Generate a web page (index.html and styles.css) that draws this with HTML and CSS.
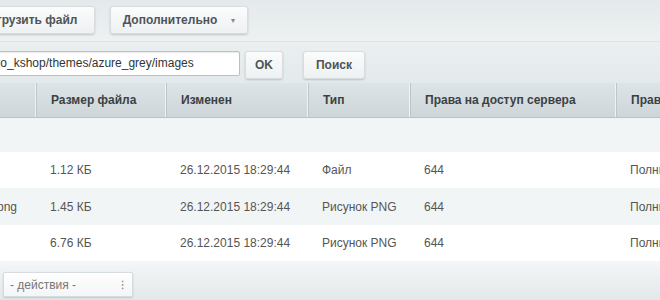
FILE: index.html
```html
<!DOCTYPE html>
<html lang="ru">
<head>
<meta charset="utf-8">
<link rel="stylesheet" href="styles.css">
</head>
<body>
<div class="page">
  <div class="toolbar">
    <div class="btn btn-upload">Загрузить файл</div>
    <div class="btn btn-more">Дополнительно <span class="caret">▾</span></div>
  </div>
  <div class="searchbar">
    <div class="path">aspro_kshop/themes/azure_grey/images</div>
    <div class="btn btn-ok">OK</div>
    <div class="btn btn-search">Поиск</div>
  </div>
  <div class="grid">
    <div class="row head">
      <div class="c c1"></div>
      <div class="c c2">Размер файла</div>
      <div class="c c3">Изменен</div>
      <div class="c c4">Тип</div>
      <div class="c c5">Права на доступ сервера</div>
      <div class="c c6">Права</div>
    </div>
    <div class="row r0">
      <div class="c c1"></div>
      <div class="c c2"></div>
      <div class="c c3"></div>
      <div class="c c4"></div>
      <div class="c c5"></div>
      <div class="c c6"></div>
    </div>
    <div class="row r1">
      <div class="c c1"></div>
      <div class="c c2">1.12 КБ</div>
      <div class="c c3">26.12.2015 18:29:44</div>
      <div class="c c4">Файл</div>
      <div class="c c5">644</div>
      <div class="c c6">Полный</div>
    </div>
    <div class="row r2">
      <div class="c c1 name">png</div>
      <div class="c c2">1.45 КБ</div>
      <div class="c c3">26.12.2015 18:29:44</div>
      <div class="c c4">Рисунок PNG</div>
      <div class="c c5">644</div>
      <div class="c c6">Полный</div>
    </div>
    <div class="row r3">
      <div class="c c1"></div>
      <div class="c c2">6.76 КБ</div>
      <div class="c c3">26.12.2015 18:29:44</div>
      <div class="c c4">Рисунок PNG</div>
      <div class="c c5">644</div>
      <div class="c c6">Полный</div>
    </div>
  </div>
  <div class="footer">
    <div class="select"><span>- действия -</span><span class="arrows">⁝</span></div>
  </div>
</div>
</body>
</html>
```
FILE: styles.css
```css
html, body {
  margin: 0;
  padding: 0;
}
body {
  width: 660px;
  height: 300px;
  overflow: hidden;
  background: #e9eef0;
  font-family: "Liberation Sans", Arial, sans-serif;
  font-size: 12px;
  color: #555;
}
.page {
  width: 660px;
  overflow: hidden;
}
.toolbar {
  height: 42px;
  box-sizing: border-box;
  padding-top: 6px;
  display: flex;
  gap: 15px;
  background: linear-gradient(#e4e9eb, #edf1f2);
  border-bottom: 1px solid #dfe5e7;
}
.btn {
  box-sizing: border-box;
  height: 28px;
  display: flex;
  align-items: center;
  justify-content: center;
  background: linear-gradient(#fbfcfc, #eef1f2);
  border: 1px solid #d7dde0;
  border-radius: 3px;
  box-shadow: 0 1px 2px rgba(0,0,0,0.18);
  font-weight: bold;
  color: #4f5456;
  font-size: 12px;
  white-space: nowrap;
}
.btn-upload {
  width: 130px;
  margin-left: -35px;
}
.btn-more {
  width: 138px;
  gap: 14px;
}
.caret {
  font-size: 8px;
  color: #888;
  font-weight: normal;
}
.searchbar {
  height: 41px;
  box-sizing: border-box;
  padding-top: 9px;
  display: flex;
  align-items: flex-start;
  background: linear-gradient(#eaeff0, #e4eaec);
}
.path {
  box-sizing: border-box;
  width: 264px;
  margin-left: -24px;
  height: 25px;
  line-height: 23px;
  border: 1px solid #b8c2c6;
  background: #fff;
  padding-left: 0;
  color: #333;
  font-size: 12px;
  white-space: nowrap;
  overflow: hidden;
  border-radius: 2px;
  box-shadow: inset 0 1px 1px rgba(0,0,0,0.08);
}
.btn-ok {
  width: 38px;
  margin-left: 5px;
}
.btn-search {
  width: 62px;
  margin-left: 20px;
}
.grid {
  display: flex;
  flex-direction: column;
}
.row {
  display: grid;
  grid-template-columns: 35px 130px 142px 102px 206px 80px;
  align-items: center;
}
.head {
  height: 35px;
  background: linear-gradient(#dde4e7, #cdd6da);
  border-bottom: 1px solid #b7c3c8;
  box-sizing: border-box;
  color: #3b4143;
  font-weight: bold;
}
.head .c {
  height: 100%;
  display: flex;
  align-items: center;
  border-left: 1px solid #eef2f3;
  box-shadow: inset 1px 0 0 #bcc7cb;
}
.head .c1 {
  border-left: none;
  box-shadow: none;
}
.c {
  box-sizing: border-box;
  padding-left: 15px;
  white-space: nowrap;
  overflow: hidden;
}
.c1 {
  padding-left: 0;
}
.name {
  margin-left: -3px;
}
.r0 {
  height: 34px;
  background: #f2f5f6;
}
.r1, .r3 {
  height: 36px;
  background: #fff;
}
.r2 {
  height: 37px;
  background: #f2f5f6;
}
.footer {
  height: 40px;
  box-sizing: border-box;
  padding-top: 11px;
  padding-left: 3px;
  background: linear-gradient(#f4f6f7, #e2e8ea);
}
.select {
  box-sizing: border-box;
  width: 130px;
  height: 25px;
  display: flex;
  align-items: center;
  justify-content: space-between;
  padding: 0 8px 0 6px;
  background: linear-gradient(#ffffff, #f3f5f6);
  border: 1px solid #d5dbde;
  border-radius: 2px;
  box-shadow: 0 1px 2px rgba(0,0,0,0.15);
  color: #777;
  font-size: 12px;
}
.arrows {
  color: #888;
  font-size: 12px;
}
```
